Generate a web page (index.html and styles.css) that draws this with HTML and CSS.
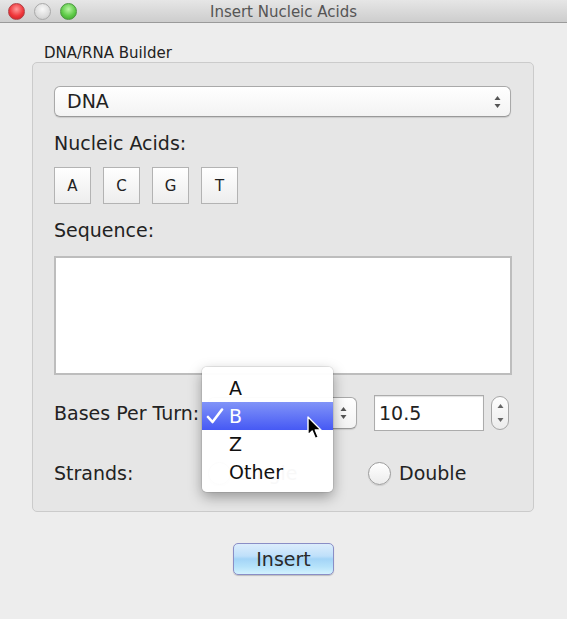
FILE: index.html
```html
<!DOCTYPE html>
<html>
<head>
<meta charset="utf-8">
<link rel="stylesheet" href="styles.css">
</head>
<body>
<div class="window">
  <div class="titlebar">
    <div class="lights">
      <span class="light red"></span>
      <span class="light gray"></span>
      <span class="light green"></span>
    </div>
    <div class="title">Insert Nucleic Acids</div>
  </div>
  <div class="content">
    <div class="group-title">DNA/RNA Builder</div>
    <div class="group">
      <div class="popup wide">
        <span class="popup-text">DNA</span>
        <svg class="updown" width="7" height="12" viewBox="0 0 7 12"><path d="M3.5 0 L6.5 4 L0.5 4 Z M3.5 12 L6.5 8 L0.5 8 Z" fill="#555"/></svg>
      </div>
      <div class="label first">Nucleic Acids:</div>
      <div class="base-row">
        <div class="base-btn">A</div>
        <div class="base-btn">C</div>
        <div class="base-btn">G</div>
        <div class="base-btn">T</div>
      </div>
      <div class="label second">Sequence:</div>
      <div class="textarea"></div>
      <div class="row bpt">
        <span class="label row-label">Bases Per Turn:</span>
        <div class="popup small">
          <span class="popup-text"></span>
          <svg class="updown" width="7" height="12" viewBox="0 0 7 12"><path d="M3.5 0 L6.5 4 L0.5 4 Z M3.5 12 L6.5 8 L0.5 8 Z" fill="#555"/></svg>
        </div>
        <div class="field">10.5</div>
        <div class="stepper">
          <svg width="7" height="22" viewBox="0 0 7 22"><path d="M3.5 2 L6.5 6 L0.5 6 Z M3.5 20 L6.5 16 L0.5 16 Z" fill="#666"/></svg>
        </div>
      </div>
      <div class="row strands">
        <span class="label row-label">Strands:</span>
        <div class="radio single"><span class="circle"></span><span class="label">Single</span></div>
        <div class="radio"><span class="circle"></span><span class="label">Double</span></div>
      </div>
    </div>
    <div class="actions">
      <div class="insert">Insert</div>
    </div>
  </div>

  <div class="menu">
    <div class="item">A</div>
    <div class="item selected">
      <svg class="check" width="18" height="16" viewBox="0 0 18 16"><path d="M2 9 L6.5 14 L16 1.5" fill="none" stroke="#fff" stroke-width="2.6" stroke-linecap="round" stroke-linejoin="round"/></svg>
      B
    </div>
    <div class="item">Z</div>
    <div class="item">Other</div>
  </div>

  <svg class="cursor" width="16" height="26" viewBox="0 0 16 26"><path d="M1 1 L1 19 L5.2 15 L8.3 22.5 L11.3 21.2 L8.3 14 L14 14 Z" fill="#000" stroke="#fff" stroke-width="1.4" stroke-linejoin="round"/></svg>
</div>
</body>
</html>
```

FILE: styles.css
```css
html, body {
  margin: 0;
  padding: 0;
}
body {
  background: #ededed;
  font-family: "DejaVu Sans", "Liberation Sans", sans-serif;
  color: #222;
}
.window {
  position: relative;
  width: 567px;
  height: 619px;
  overflow: hidden;
  background: #ededed;
}
.titlebar {
  position: relative;
  height: 22px;
  border-bottom: 1px solid #9a9a9a;
  background: linear-gradient(#e6e6e6, #cdcdcd);
}
.lights {
  position: absolute;
  left: 8px;
  top: 3px;
  display: flex;
  gap: 9px;
}
.light {
  width: 17px;
  height: 17px;
  border-radius: 50%;
  box-sizing: border-box;
}
.light.red {
  background: radial-gradient(circle at 50% 35%, #ff9a9a 0, #f0373b 55%, #c11d22 100%);
  border: 1px solid #b04045;
}
.light.gray {
  background: radial-gradient(circle at 50% 35%, #f8f8f8 0, #dcdcdc 60%, #c4c4c4 100%);
  border: 1px solid #a9a9a9;
}
.light.green {
  background: radial-gradient(circle at 50% 35%, #b9f5a4 0, #5fcb48 55%, #3a9a2b 100%);
  border: 1px solid #4c9840;
}
.title {
  text-align: center;
  font-size: 15px;
  line-height: 22px;
  padding-top: 1px;
  color: #555;
}
.content {
  padding-top: 21px;
}
.group-title {
  margin-left: 44px;
  font-size: 15px;
  line-height: 18px;
  color: #222;
}
.group {
  margin-left: 32px;
  width: 502px;
  box-sizing: border-box;
  border: 1px solid #cbcbcb;
  border-radius: 5px;
  background: #e6e6e6;
  padding: 23px 22px 24px 21px;
}
.popup {
  position: relative;
  box-sizing: border-box;
  height: 31px;
  border: 1px solid #a9a9a9;
  border-bottom-color: #999;
  border-radius: 6px;
  background: linear-gradient(#ffffff, #f3f3f3);
  box-shadow: 0 1px 1px rgba(0,0,0,0.12);
  display: flex;
  align-items: center;
  justify-content: space-between;
  padding: 0 9px 0 12px;
}
.popup-text {
  font-size: 19px;
  line-height: 23px;
}
.popup.wide {
  width: 100%;
}
.label {
  font-size: 19px;
  line-height: 23px;
}
.label.first {
  margin-top: 15px;
}
.label.second {
  margin-top: 15px;
}
.base-row {
  margin-top: 12px;
  display: flex;
  gap: 12px;
}
.base-btn {
  width: 37px;
  height: 37px;
  box-sizing: border-box;
  border: 1px solid #b3b3b3;
  background: linear-gradient(#ffffff, #ededed);
  display: flex;
  align-items: center;
  justify-content: center;
  font-size: 15px;
  color: #222;
}
.textarea {
  margin-top: 14px;
  height: 119px;
  width: calc(100% + 1px);
  box-sizing: border-box;
  border: 2px solid #bdbdbd;
  background: #fff;
}
.row {
  display: flex;
  align-items: center;
}
.row-label {
  width: 154px;
  flex: none;
}
.bpt {
  margin-top: 20px;
  height: 36px;
}
.popup.small {
  width: 149px;
  height: 32px;
}
.field {
  margin-left: 17px;
  width: 110px;
  height: 36px;
  box-sizing: border-box;
  border: 1px solid #acacac;
  box-shadow: inset 0 1px 1px rgba(0,0,0,0.12);
  background: #fff;
  font-size: 19px;
  line-height: 34px;
  padding-left: 4px;
}
.stepper {
  margin-left: 7px;
  width: 18px;
  height: 34px;
  box-sizing: border-box;
  border: 1px solid #a5a5a5;
  border-radius: 9px;
  background: linear-gradient(#fdfdfd, #ececec);
  display: flex;
  align-items: center;
  justify-content: center;
}
.strands {
  margin-top: 28px;
  height: 28px;
}
.radio {
  display: flex;
  align-items: center;
  gap: 8px;
}
.radio.single {
  width: 160px;
  flex: none;
}
.circle {
  width: 23px;
  height: 23px;
  box-sizing: border-box;
  border-radius: 50%;
  border: 1px solid #9c9c9c;
  background: linear-gradient(#ffffff, #ececec);
  box-shadow: 0 1px 1px rgba(0,0,0,0.1);
}
.actions {
  margin-top: 31px;
  display: flex;
  justify-content: center;
}
.insert {
  width: 101px;
  height: 32px;
  box-sizing: border-box;
  border: 1px solid #8a8ec6;
  border-radius: 5px;
  background: linear-gradient(#dcedfc 0%, #bfe0fa 40%, #a3d4f7 50%, #b5e2fa 75%, #d3f2fe 100%);
  box-shadow: 0 1px 1px rgba(0,0,0,0.2);
  font-size: 19px;
  line-height: 30px;
  text-align: center;
  color: #2a2a2a;
}
.menu {
  position: absolute;
  left: 202px;
  top: 367px;
  width: 131px;
  height: 125px;
  box-sizing: border-box;
  padding: 7px 0 6px;
  border-radius: 5px;
  background: rgba(255,255,255,0.97);
  box-shadow: 0 5px 14px rgba(0,0,0,0.35), 0 0 0 1px rgba(0,0,0,0.08);
}
.item {
  position: relative;
  height: 28px;
  line-height: 28px;
  padding-left: 27px;
  box-sizing: border-box;
  font-size: 19px;
  color: #111;
}
.item.selected {
  background: linear-gradient(#8194f8, #4659f4);
  color: #fff;
}
.check {
  position: absolute;
  left: 4px;
  top: 6px;
}
.cursor {
  position: absolute;
  left: 307px;
  top: 416px;
}
```
